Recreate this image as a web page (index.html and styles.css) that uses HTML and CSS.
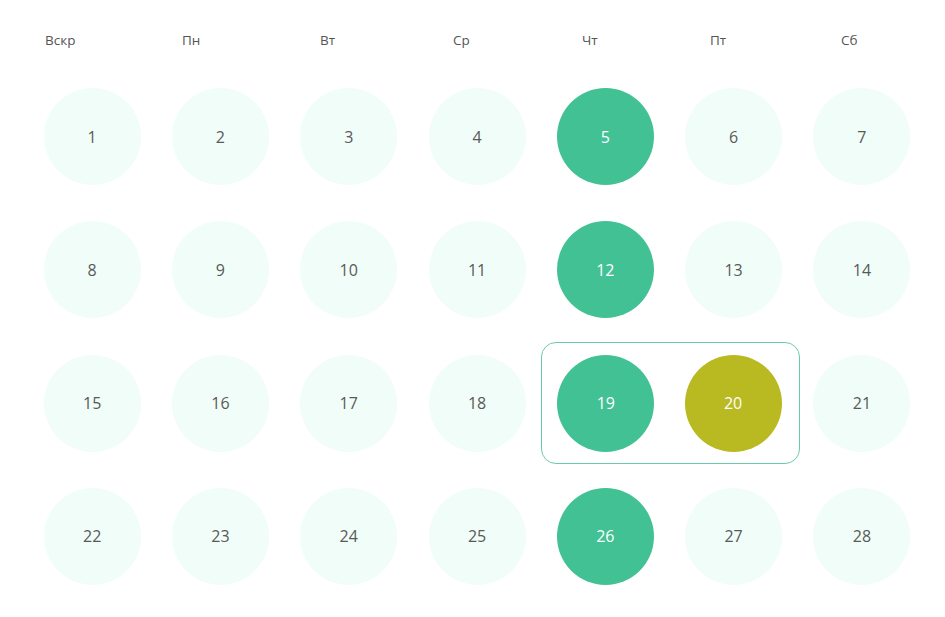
FILE: index.html
```html
<!DOCTYPE html>
<html lang="ru">
<head>
<meta charset="utf-8">
<title>Календарь</title>
<link rel="stylesheet" href="styles.css">
</head>
<body>
<div class="calendar">
  <div class="weekdays">
    <span>Вскр</span><span>Пн</span><span>Вт</span><span>Ср</span><span>Чт</span><span>Пт</span><span>Сб</span>
  </div>
  <div class="days">
    <div class="day">1</div><div class="day">2</div><div class="day">3</div><div class="day">4</div><div class="day active">5</div><div class="day">6</div><div class="day">7</div>
    <div class="day">8</div><div class="day">9</div><div class="day">10</div><div class="day">11</div><div class="day active">12</div><div class="day">13</div><div class="day">14</div>
    <div class="day">15</div><div class="day">16</div><div class="day">17</div><div class="day">18</div>
    <div class="range">
      <div class="day active">19</div><div class="day today">20</div>
    </div>
    <div class="day">21</div>
    <div class="day">22</div><div class="day">23</div><div class="day">24</div><div class="day">25</div><div class="day active">26</div><div class="day">27</div><div class="day">28</div>
  </div>
</div>
</body>
</html>
```
FILE: styles.css
```css
html, body {
  margin: 0;
  padding: 0;
  background: #ffffff;
}
body {
  font-family: "Open Sans", "Noto Sans", "DejaVu Sans", sans-serif;
  color: #555555;
}
.calendar {
  width: 945px;
  height: 617px;
}
.weekdays {
  display: grid;
  grid-template-columns: 137px 138px 133px 129px 128px 131px 60px;
  padding: 31px 0 0 45px;
  height: 44.5px;
  font-size: 13.5px;
  line-height: 18px;
  color: #555555;
}
.days {
  display: grid;
  grid-template-columns: repeat(7, 128.3px);
  grid-auto-rows: 122px;
  row-gap: 11.3px;
  padding-left: 28px;
  justify-items: center;
  align-items: center;
}
.day {
  width: 97px;
  height: 97px;
  border-radius: 50%;
  background: #f1fdf8;
  display: flex;
  align-items: center;
  justify-content: center;
  font-size: 16px;
  color: #595959;
}
.day.active {
  background: #42c194;
  color: #ffffff;
}
.day.today {
  background: #b9b921;
  color: #ffffff;
}
.range {
  grid-column: span 2;
  justify-self: stretch;
  align-self: stretch;
  margin-right: -2px;
  box-sizing: border-box;
  border: 1px solid #6ccaa9;
  border-radius: 15px;
  display: grid;
  grid-template-columns: 127.3px 127.3px;
  justify-content: start;
  justify-items: center;
  align-items: center;
}
```
